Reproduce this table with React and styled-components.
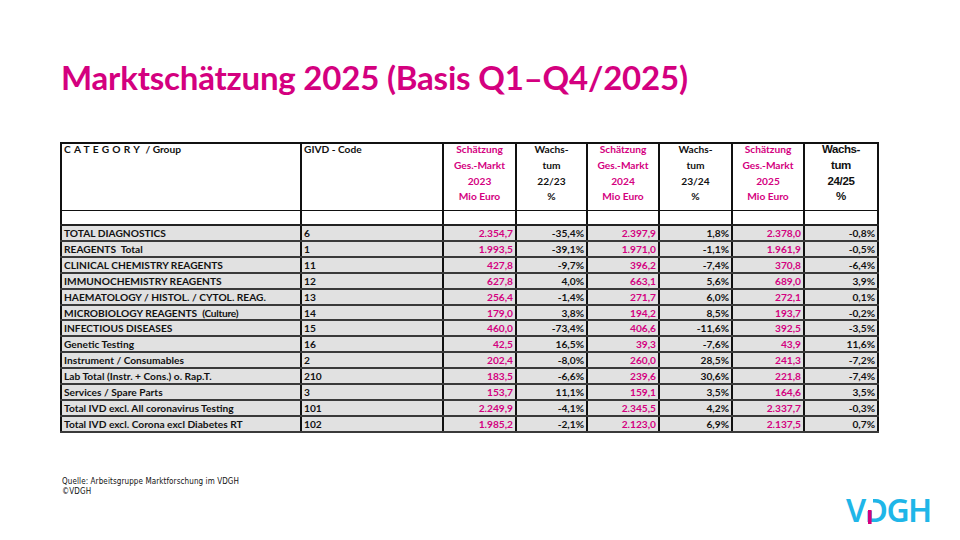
import React from 'react';
import styled, { createGlobalStyle } from 'styled-components';

const PINK = '#d4007f';
const CYAN = '#1fb6e8';

const GlobalStyle = createGlobalStyle`
  html, body {
    margin: 0;
    padding: 0;
    background: #ffffff;
  }
  body {
    font-family: Lato, 'Open Sans', sans-serif;
  }
`;

const Slide = styled.div`
  width: 960px;
  height: 540px;
  position: relative;
  overflow: hidden;
  background: #ffffff;
  padding: 57px 0 0 60px;
  box-sizing: border-box;
`;

const Title = styled.h1`
  margin: 0 0 45px 1px;
  font-family: Lato, sans-serif;
  font-weight: 700;
  font-size: 33px;
  line-height: 40px;
  color: ${PINK};
  letter-spacing: -0.2px;
`;

const Table = styled.table`
  border-collapse: collapse;
  table-layout: fixed;
  width: 817px;
  font-family: Lato, sans-serif;
  font-size: 10.2px;
  font-weight: 700;
  color: #111;
`;

const Col = styled.col``;

const HeadCell = styled.th`
  border: 2px solid #111;
  border-bottom-width: 1.5px;
  vertical-align: top;
  height: 66px;
  padding: 0 2px 0;
  text-align: ${(p) => (p.$left ? 'left' : 'center')};
  font-weight: 700;
  line-height: 15.8px;
  color: ${(p) => (p.$pink ? PINK : '#111')};
  font-family: ${(p) => (p.$arial ? "'Liberation Sans', Arial, sans-serif" : 'Lato, sans-serif')};
  font-size: ${(p) => (p.$arial ? '11.5px' : '10.2px')};
  letter-spacing: ${(p) => (p.$arial ? '-0.4px' : '0')};
`;

const HeadText = styled.div`
  margin-top: -2px;
`;

const Spaced = styled.span`
  letter-spacing: 3.2px;
`;

const SpacerCell = styled.td`
  border-left: 2px solid #111;
  border-right: 2px solid #111;
  border-bottom: 2px solid #222;
  height: 13px;
  padding: 0;
  background: #fff;
`;

const Cell = styled.td`
  border-left: 2px solid #111;
  border-right: 2px solid #111;
  border-bottom: 2px solid #3a3a3a;
  background: #e1e1e1;
  height: 11.9px;
  padding: 2px 2px 0 2px;
  line-height: 11.9px;
  white-space: nowrap;
  overflow: hidden;
  text-align: ${(p) => (p.$num ? 'right' : 'left')};
  color: ${(p) => (p.$pink ? PINK : '#111')};
`;

const Thin = styled.span`
  letter-spacing: -0.3px;
`;

const Footer = styled.div`
  position: absolute;
  left: 62px;
  top: 477px;
  font-family: 'DejaVu Sans Condensed', 'DejaVu Sans', sans-serif;
  font-size: 8px;
  line-height: 10px;
  color: #111;
  letter-spacing: 0.1px;
`;

const Logo = styled.div`
  position: absolute;
  left: 846px;
  top: 491px;
  display: flex;
  align-items: center;
  font-family: 'Noto Sans', 'Open Sans', sans-serif;
  font-weight: 600;
  font-size: 32px;
  line-height: 38px;
  color: ${CYAN};
  letter-spacing: -1.6px;
`;

const LogoD = styled.span`
  position: relative;
  /* white cover over the upper stem, magenta bar for the lower stem */
  &::before {
    content: '';
    position: absolute;
    left: 2px;
    top: 8px;
    width: 6px;
    height: 12px;
    background: #fff;
  }
  &::after {
    content: '';
    position: absolute;
    left: 3px;
    top: 19px;
    width: 4px;
    height: 14px;
    background: linear-gradient(90deg, #d4007f 65%, rgba(212, 0, 127, 0.35));
  }
`;

const rows = [
  ['TOTAL DIAGNOSTICS', '6', '2.354,7', '-35,4%', '2.397,9', '1,8%', '2.378,0', '-0,8%'],
  [<>REAGENTS&nbsp; Total</>, '1', '1.993,5', '-39,1%', '1.971,0', '-1,1%', '1.961,9', '-0,5%'],
  ['CLINICAL CHEMISTRY REAGENTS', '11', '427,8', '-9,7%', '396,2', '-7,4%', '370,8', '-6,4%'],
  ['IMMUNOCHEMISTRY REAGENTS', '12', '627,8', '4,0%', '663,1', '5,6%', '689,0', '3,9%'],
  ['HAEMATOLOGY / HISTOL. / CYTOL. REAG.', '13', '256,4', '-1,4%', '271,7', '6,0%', '272,1', '0,1%'],
  [<>MICROBIOLOGY REAGENTS&nbsp; <Thin>(Culture)</Thin></>, '14', '179,0', '3,8%', '194,2', '8,5%', '193,7', '-0,2%'],
  ['INFECTIOUS DISEASES', '15', '460,0', '-73,4%', '406,6', '-11,6%', '392,5', '-3,5%'],
  ['Genetic Testing', '16', '42,5', '16,5%', '39,3', '-7,6%', '43,9', '11,6%'],
  ['Instrument / Consumables', '2', '202,4', '-8,0%', '260,0', '28,5%', '241,3', '-7,2%'],
  ['Lab Total (Instr. + Cons.) o. Rap.T.', '210', '183,5', '-6,6%', '239,6', '30,6%', '221,8', '-7,4%'],
  ['Services / Spare Parts', '3', '153,7', '11,1%', '159,1', '3,5%', '164,6', '3,5%'],
  ['Total IVD excl. All coronavirus Testing', '101', '2.249,9', '-4,1%', '2.345,5', '4,2%', '2.337,7', '-0,3%'],
  ['Total IVD excl. Corona excl Diabetes RT', '102', '1.985,2', '-2,1%', '2.123,0', '6,9%', '2.137,5', '0,7%'],
];

const widths = [240, 142, 73, 71, 72, 73, 72, 74];

const Estimate = ({ year }) => (
  <HeadText>
    Schätzung<br />Ges.-Markt<br />{year}<br />Mio Euro
  </HeadText>
);

const Growth = ({ span }) => (
  <HeadText>
    Wachs-<br />tum<br />{span}<br />%
  </HeadText>
);

export default function App() {
  return (
    <>
      <GlobalStyle />
      <Slide>
        <Title>Marktschätzung 2025 (Basis Q1–Q4/2025)</Title>
        <Table>
          <colgroup>
            {widths.map((w, i) => (
              <Col key={i} style={{ width: w }} />
            ))}
          </colgroup>
          <thead>
            <tr>
              <HeadCell $left><HeadText><Spaced>CATEGORY</Spaced> / Group</HeadText></HeadCell>
              <HeadCell $left><HeadText>GIVD - Code</HeadText></HeadCell>
              <HeadCell $pink><Estimate year="2023" /></HeadCell>
              <HeadCell><Growth span="22/23" /></HeadCell>
              <HeadCell $pink><Estimate year="2024" /></HeadCell>
              <HeadCell><Growth span="23/24" /></HeadCell>
              <HeadCell $pink><Estimate year="2025" /></HeadCell>
              <HeadCell $arial><Growth span="24/25" /></HeadCell>
            </tr>
          </thead>
          <tbody>
            <tr>
              {widths.map((_, i) => (
                <SpacerCell key={i} />
              ))}
            </tr>
            {rows.map((r, ri) => (
              <tr key={ri}>
                {r.map((v, ci) => (
                  <Cell key={ci} $num={ci > 1} $pink={ci === 2 || ci === 4 || ci === 6}>
                    {v}
                  </Cell>
                ))}
              </tr>
            ))}
          </tbody>
        </Table>
        <Footer>
          Quelle: Arbeitsgruppe Marktforschung im VDGH
          <br />
          ©VDGH
        </Footer>
        <Logo>
          V<LogoD>D</LogoD>GH
        </Logo>
      </Slide>
    </>
  );
}
